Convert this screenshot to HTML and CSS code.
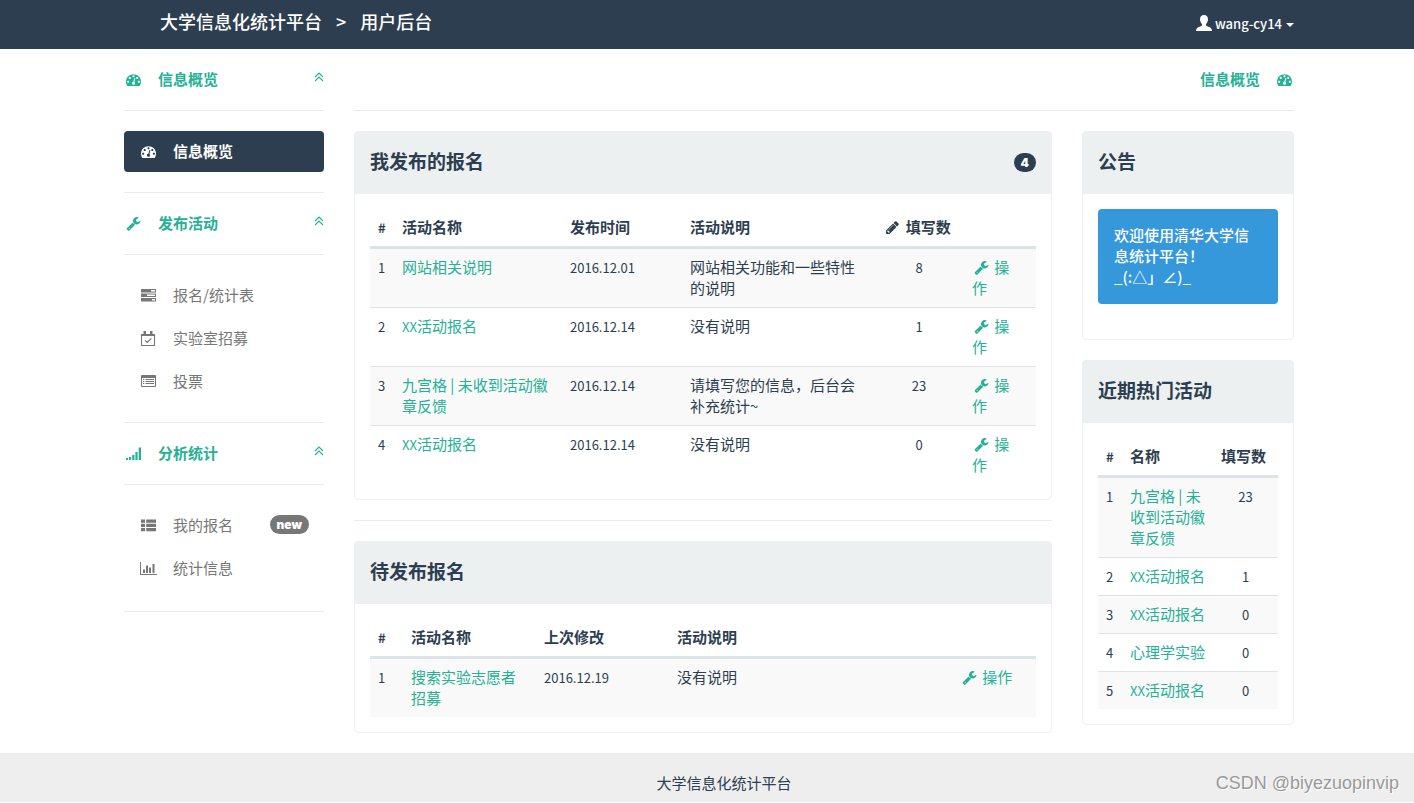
FILE: index.html
```html
<!DOCTYPE html>
<html lang="zh-CN">
<head>
<meta charset="utf-8">
<meta name="viewport" content="width=device-width, initial-scale=1">
<title>大学信息化统计平台</title>
<link rel="stylesheet" href="styles.css">
</head>
<body>
<svg class="sprite" aria-hidden="true">
  <symbol id="i-gauge" viewBox="0 0 1792 1792"><path d="M384 1152q0-53-37.5-90.5t-90.5-37.5-90.5 37.5-37.5 90.5 37.5 90.5 90.5 37.5 90.5-37.5 37.5-90.5zm192-448q0-53-37.5-90.5t-90.5-37.5-90.5 37.5-37.5 90.5 37.5 90.5 90.5 37.5 90.5-37.5 37.5-90.5zm428 481l101-382q6-26-7.5-48.5t-38.5-29.5-48 6.5-30 39.5l-101 382q-60 5-107 43.5t-63 98.5q-20 77 20 146t117 89 146-20 89-117q16-60-6-117t-72-91zm660-33q0-53-37.5-90.5t-90.5-37.5-90.5 37.5-37.5 90.5 37.5 90.5 90.5 37.5 90.5-37.5 37.5-90.5zm-640-640q0-53-37.5-90.5t-90.5-37.5-90.5 37.5-37.5 90.5 37.5 90.5 90.5 37.5 90.5-37.5 37.5-90.5zm448 192q0-53-37.5-90.5t-90.5-37.5-90.5 37.5-37.5 90.5 37.5 90.5 90.5 37.5 90.5-37.5 37.5-90.5zm320 448q0 261-141 483-19 29-54 29h-1402q-35 0-54-29-141-221-141-483 0-182 71-348t191-286 286-191 348-71 348 71 286 191 191 286 71 348z"/></symbol>
  <symbol id="i-wrench" viewBox="0 0 1792 1792"><path d="M448 1472q0-26-19-45t-45-19-45 19-19 45 19 45 45 19 45-19 19-45zm644-420l-682 682q-37 37-90 37-52 0-91-37l-106-108q-38-36-38-90 0-53 38-91l681-681q39 98 114.500 173.500t173.500 114.500zm634-435q0 39-23 106-47 134-164.500 217.500t-258.500 83.500q-185 0-316.500-131.500t-131.500-316.500 131.500-316.500 316.500-131.500q58 0 121.500 16.500t107.500 46.500q16 11 16 28t-16 28l-293 169v224l193 107q5-3 79-48.500t135.500-81 70.500-35.500q15 0 23.500 10t8.500 25z"/></symbol>
  <symbol id="i-pencil" viewBox="0 0 1792 1792"><path d="M491 1536l91-91-235-235-91 91v107h128v128h107zm523-928q0-22-22-22-10 0-17 7l-542 542q-7 7-7 17 0 22 22 22 10 0 17-7l542-542q7-7 7-17zm-54-192l416 416-832 832h-416v-416zm683 96q0 53-37 90l-166 166-416-416 166-165q36-38 90-38 53 0 91 38l235 234q37 39 37 91z"/></symbol>
  <symbol id="i-up" viewBox="0 0 10 10"><path d="M1 5l4-4 4 4M1 9l4-4 4 4" fill="none" stroke="currentColor" stroke-width="1.100"/></symbol>
  <symbol id="i-tasks" viewBox="0 0 15 15"><path fill-rule="evenodd" d="M0 1h15v3.500H0zM10 2v1.500h4V2zM0 5.500h15V9H0zM6 6.500V8h8V6.500zM0 10h15v3.500H0zM11 11v1.500h3V11z"/></symbol>
  <symbol id="i-check" viewBox="0 0 15 15"><path d="M.5 3.500h13v11H.5zM4 9.300l2.300 2.200L10.300 7.500" fill="none" stroke="currentColor" stroke-width="1.100"/><path d="M0 3h14v2H0zM2.500 0H5v4H2.500zM9 0h2.500v4H9z"/></symbol>
  <symbol id="i-list" viewBox="0 0 15 15"><path fill-rule="evenodd" d="M1 1h13q1 0 1 1v10q0 1-1 1H1q-1 0-1-1V2q0-1 1-1zM1 4v8h13V4zM2 5h1.300v1H2zM4.500 5H13v1H4.500zM2 7h1.300v1H2zM4.500 7H13v1H4.500zM2 9h1.300v1H2zM4.500 9H13v1H4.500z"/></symbol>
  <symbol id="i-signal" viewBox="0 0 15 15"><path d="M0 12h2v2H0zM3 11h2.200v3H3zM6.200 9h2.200v5H6.200zM9.400 6h2.200v8H9.400zM12.700 1.500H15V14h-2.300z"/></symbol>
  <symbol id="i-thlist" viewBox="0 0 15 15"><path d="M0 1.500h4v3.300H0zM5.200 1.500H15v3.300H5.200zM0 5.700h4V9H0zM5.200 5.700H15V9H5.200zM0 9.900h4v3.300H0zM5.200 9.900H15v3.300H5.200z"/></symbol>
  <symbol id="i-chart" viewBox="0 0 17 15"><path d="M0 1h1v12h16v1H0zM3 8.500h2V12H3zM6 4.500h2V12H6zM9 6.500h2V12H9zM12.500 3h2v9h-2z"/></symbol>
  <symbol id="i-user" viewBox="0 0 16 16"><path d="M8 0C5.500 0 3.900 1.800 4 4.400c.1 1.900.9 3.500 2 4.500v1.400c-.3.700-1.400 1.100-3.100 1.800C1 12.900.2 13.700 0 16h16c-.2-2.300-1-3.100-2.900-3.900-1.700-.7-2.800-1.100-3.100-1.800V8.900c1.100-1 1.900-2.600 2-4.500C12.100 1.800 10.500 0 8 0z"/></symbol>
</svg>

<header class="topbar">
  <div class="container topbar-inner">
    <nav class="brand"><a href="#">大学信息化统计平台</a><span class="sep">&gt;</span><a href="#">用户后台</a></nav>
    <button class="user" type="button"><svg class="icon-user"><use href="#i-user"/></svg><span>wang-cy14</span><i class="caret"></i></button>
  </div>
</header>

<div class="container layout">
  <aside class="sidebar">
    <button class="group" type="button"><svg class="icon"><use href="#i-gauge"/></svg><span>信息概览</span><svg class="chev"><use href="#i-up"/></svg></button>
    <nav class="menu">
      <a class="item active" href="#"><svg class="icon"><use href="#i-gauge"/></svg><span>信息概览</span></a>
    </nav>
    <button class="group" type="button"><svg class="icon"><use href="#i-wrench"/></svg><span>发布活动</span><svg class="chev"><use href="#i-up"/></svg></button>
    <nav class="menu">
      <a class="item" href="#"><svg class="icon"><use href="#i-tasks"/></svg><span>报名/统计表</span></a>
      <a class="item" href="#"><svg class="icon"><use href="#i-check"/></svg><span>实验室招募</span></a>
      <a class="item" href="#"><svg class="icon"><use href="#i-list"/></svg><span>投票</span></a>
    </nav>
    <button class="group" type="button"><svg class="icon"><use href="#i-signal"/></svg><span>分析统计</span><svg class="chev"><use href="#i-up"/></svg></button>
    <nav class="menu">
      <a class="item" href="#"><svg class="icon"><use href="#i-thlist"/></svg><span>我的报名</span><span class="badge badge-new">new</span></a>
      <a class="item" href="#"><svg class="icon icon-wide"><use href="#i-chart"/></svg><span>统计信息</span></a>
    </nav>
  </aside>

  <div class="content">
    <div class="page-title"><span>信息概览</span><svg class="icon"><use href="#i-gauge"/></svg></div>
    <div class="columns">
      <main class="primary">
        <section class="card">
          <div class="card-head"><h2>我发布的报名</h2><span class="badge">4</span></div>
          <div class="card-body">
            <table class="table">
              <colgroup><col class="c-id"><col class="c-name"><col class="c-date"><col><col class="c-count"><col class="c-act"></colgroup>
              <thead><tr><th class="num">#</th><th>活动名称</th><th>发布时间</th><th>活动说明</th><th class="mid"><svg class="icon"><use href="#i-pencil"/></svg> 填写数</th><th></th></tr></thead>
              <tbody>
                <tr><td class="num">1</td><td><a href="#">网站相关说明</a></td><td class="num">2016.12.01</td><td>网站相关功能和一些特性的说明</td><td class="num mid">8</td><td class="act"><a href="#"><svg class="icon"><use href="#i-wrench"/></svg> 操作</a></td></tr>
                <tr><td class="num">2</td><td><a href="#"><span class="latin">XX</span>活动报名</a></td><td class="num">2016.12.14</td><td>没有说明</td><td class="num mid">1</td><td class="act"><a href="#"><svg class="icon"><use href="#i-wrench"/></svg> 操作</a></td></tr>
                <tr><td class="num">3</td><td><a href="#">九宫格 | 未收到活动徽章反馈</a></td><td class="num">2016.12.14</td><td>请填写您的信息，后台会补充统计~</td><td class="num mid">23</td><td class="act"><a href="#"><svg class="icon"><use href="#i-wrench"/></svg> 操作</a></td></tr>
                <tr><td class="num">4</td><td><a href="#"><span class="latin">XX</span>活动报名</a></td><td class="num">2016.12.14</td><td>没有说明</td><td class="num mid">0</td><td class="act"><a href="#"><svg class="icon"><use href="#i-wrench"/></svg> 操作</a></td></tr>
              </tbody>
            </table>
          </div>
        </section>
        <hr class="rule">
        <section class="card">
          <div class="card-head"><h2>待发布报名</h2></div>
          <div class="card-body">
            <table class="table">
              <colgroup><col class="d-id"><col class="d-name"><col class="d-name"><col><col class="d-act"></colgroup>
              <thead><tr><th class="num">#</th><th>活动名称</th><th>上次修改</th><th>活动说明</th><th></th></tr></thead>
              <tbody>
                <tr><td class="num">1</td><td><a href="#">搜索实验志愿者招募</a></td><td class="num">2016.12.19</td><td>没有说明</td><td><a href="#"><svg class="icon"><use href="#i-wrench"/></svg> 操作</a></td></tr>
              </tbody>
            </table>
          </div>
        </section>
      </main>

      <aside class="secondary">
        <section class="card">
          <div class="card-head"><h2>公告</h2></div>
          <div class="card-body"><div class="alert">欢迎使用清华大学信息统计平台！<br>_(:△」∠)_</div></div>
        </section>
        <section class="card">
          <div class="card-head"><h2>近期热门活动</h2></div>
          <div class="card-body">
            <table class="table">
              <colgroup><col class="c-id"><col><col class="h-count"></colgroup>
              <thead><tr><th class="num">#</th><th>名称</th><th>填写数</th></tr></thead>
              <tbody>
                <tr><td class="num">1</td><td class="tight"><a href="#">九宫格 | 未收到活动徽章反馈</a></td><td class="num mid">23</td></tr>
                <tr><td class="num">2</td><td class="tight"><a href="#"><span class="latin">XX</span>活动报名</a></td><td class="num mid">1</td></tr>
                <tr><td class="num">3</td><td class="tight"><a href="#"><span class="latin">XX</span>活动报名</a></td><td class="num mid">0</td></tr>
                <tr><td class="num">4</td><td class="tight"><a href="#">心理学实验</a></td><td class="num mid">0</td></tr>
                <tr><td class="num">5</td><td class="tight"><a href="#"><span class="latin">XX</span>活动报名</a></td><td class="num mid">0</td></tr>
              </tbody>
            </table>
          </div>
        </section>
      </aside>
    </div>
  </div>
</div>

<footer class="footer">
  <p>大学信息化统计平台</p>
  <span class="watermark">CSDN @biyezuopinvip</span>
</footer>
</body>
</html>
```

FILE: styles.css
```css
* { box-sizing: border-box; }
body {
  margin: 0;
  background: #fff;
  color: #2c3e50;
  font: 15px/21px "Noto Sans CJK SC", "Noto Sans", sans-serif;
}
a { color: #24b194; text-decoration: none; }
button { margin: 0; padding: 0; border: 0; background: none; color: inherit; font: inherit; cursor: pointer; }
.sprite { display: none; }
.icon { width: 15px; height: 15px; fill: currentColor; flex: none; }
.icon-wide { width: 17px; }
.container { max-width: 1174px; margin: 0 auto; padding-left: 4px; }

.topbar { background: #2c3e50; color: #fff; }
.topbar-inner { display: flex; align-items: center; justify-content: space-between; height: 49px; }
.brand { display: flex; padding: 0 0 6px 36px; font-size: 18px; font-weight: 500; }
.brand a { color: #fff; }
.sep { margin: 0 14px; }
.user { display: flex; align-items: center; gap: 3px; padding-bottom: 3px; font-size: 13px; font-weight: 500; }
.icon-user { width: 16px; height: 16px; fill: currentColor; }
.caret { margin: 3px 0 0 1px; border: 4px solid transparent; border-top-color: #fff; border-bottom: 0; }

.layout { display: grid; grid-template-columns: 200px minmax(0, 1fr); column-gap: 30px; }
.group {
  display: flex; align-items: center; width: 100%;
  padding: 19px 0 21px; border-bottom: 1px solid #ecebeb;
  color: #24b194; font-weight: 700;
}
.group .icon { margin: 2px 17px 0 2px; }
.chev { width: 10px; height: 10px; margin: 0 0 4px auto; }
.menu { display: flex; flex-direction: column; gap: 2px; padding: 20px 0; border-bottom: 1px solid #ecebeb; }
.menu:last-child { padding-bottom: 22px; }
.item { display: flex; align-items: center; padding: 9px 15px 11px; border-radius: 4px; color: #777; }
.item .icon { margin: 2px 17px 0 2px; }
.item .icon-wide { margin: 2px 16px 0 1px; }
.active { background: #2c3e50; color: #fff; font-weight: 700; }

.badge {
  min-width: 22px; padding: 0 7px; border-radius: 10px;
  background: #2c3e50; color: #fff;
  font: 900 12px/19px Inter, sans-serif; text-align: center;
}
.badge-new { margin-left: auto; background: #777; }

.page-title {
  display: flex; align-items: center; justify-content: flex-end; gap: 17px;
  padding: 19px 2px 21px 0; border-bottom: 1px solid #ecebeb;
  color: #24b194; font-weight: 700;
}
.page-title .icon { margin-top: 2px; }
.columns { display: grid; grid-template-columns: minmax(0, 1fr) 212px; gap: 30px; padding: 20px 0; align-items: start; }
.secondary { display: grid; gap: 20px; }
.card { border: 1px solid #ecf0f1; border-radius: 4px; background: #fff; }
.card-head {
  display: flex; align-items: flex-start; justify-content: space-between;
  height: 62px; padding: 18px 15px; background: #ecf0f1;
}
.card-head h2 { margin: 0; font-size: 19px; line-height: 21px; font-weight: 700; }
.card-head .badge { margin-top: 3px; }
.card-body { padding: 15px; }
.rule { margin: 20px 0; border: 0; border-top: 1px solid #ecebeb; }

.table { width: 100%; table-layout: fixed; border-collapse: separate; border-spacing: 0; }
.table th { padding: 7px 8px 9px; border-bottom: 3px solid #dce4e5; text-align: left; vertical-align: top; font-weight: 700; }
.table td { padding: 7px 8px 9px; vertical-align: top; }
.table tbody tr + tr td { border-top: 1px solid #dce4e5; }
.table tbody tr:nth-child(odd) { background: #f9f9f9; }
.table .num { padding: 8px; font-size: 13px; }
.table .mid { text-align: center; }
.table th.mid { padding-left: 4px; padding-right: 8px; }
.table td.act { padding-right: 16px; }
.table td.tight { padding-right: 4px; }
.table .icon { margin: 0 2px; vertical-align: -2px; }
.latin { font-size: 13px; line-height: 1; }
.c-id { width: 24px; }
.c-name { width: 168px; }
.c-date { width: 120px; }
.c-count { width: 90px; }
.c-act { width: 72px; }
.d-id { width: 33px; }
.d-name { width: 133px; }
.d-act { width: 84px; }
.h-count { width: 65px; }

.alert { margin-bottom: 20px; padding: 15px 16px 17px; border-radius: 4px; background: #3498db; color: #fff; font-weight: 500; }

.footer { position: relative; padding: 19px 0 9px 34px; background: #eee; text-align: center; }
.footer p { margin: 0; }
.watermark {
  position: absolute; right: 15px; bottom: 8px;
  color: #999; text-shadow: 1px 1px 0 #fff;
  font: 18px/21px "Liberation Sans", Arial, sans-serif;
}
```
